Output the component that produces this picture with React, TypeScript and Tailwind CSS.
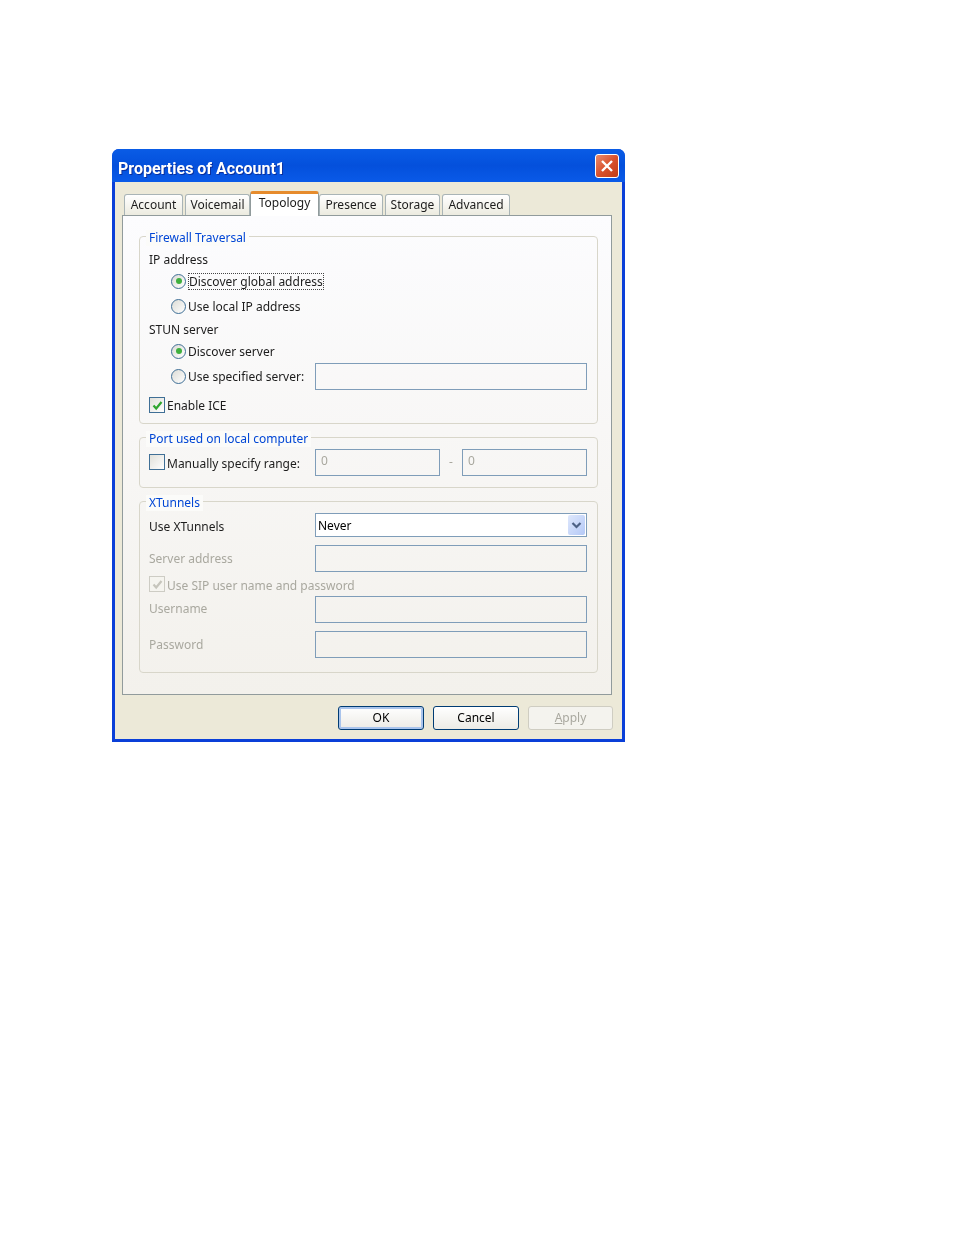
import React from 'react';

const tabs = [
  { label: 'Account', width: 'w-[59px]', gap: 'mr-[2px]' },
  { label: 'Voicemail', width: 'w-[65px]', gap: '' },
  { label: 'Topology', width: 'w-[69px]', gap: '', selected: true },
  { label: 'Presence', width: 'w-[64px]', gap: 'mr-[2px]' },
  { label: 'Storage', width: 'w-[55px]', gap: 'mr-[2px]' },
  { label: 'Advanced', width: 'w-[68px]', gap: '' },
];

function Radio({ checked }: { checked?: boolean }) {
  return (
    <span className="flex h-[15px] w-[15px] shrink-0 items-center justify-center rounded-full border border-[#3f6f96] bg-gradient-to-br from-[#dcdcd6] to-white">
      {checked && <span className="h-[6px] w-[6px] rounded-full bg-[#3fb03f]" />}
    </span>
  );
}

function Check({ checked, disabled }: { checked?: boolean; disabled?: boolean }) {
  return (
    <span
      className={
        disabled
          ? 'flex h-[16px] w-[16px] shrink-0 items-center justify-center border border-[#cdccc4] bg-[#f5f4ef]'
          : 'flex h-[16px] w-[16px] shrink-0 items-center justify-center border border-[#3f6f96] bg-gradient-to-br from-[#e0e0da] to-white'
      }
    >
      {checked && (
        <svg width="11" height="11" viewBox="0 0 11 11" fill="none">
          <path
            d="M1.5 5.5 L4.2 8.5 L9.5 2"
            stroke={disabled ? '#c6c5bc' : '#2fa52f'}
            strokeWidth="2.2"
          />
        </svg>
      )}
    </span>
  );
}

function Field({ value, className }: { value?: string; className: string }) {
  return (
    <div className={`flex shrink-0 items-center border border-[#7f9db9] pb-[3px] pl-[5px] text-[#a9a89f] ${className}`}>
      {value}
    </div>
  );
}

function Group({ title, className, children }: { title: string; className: string; children: React.ReactNode }) {
  return (
    <div className={`relative ml-[16px] mr-[13px] rounded-[4px] border border-[#d8d6ca] pl-[9px] ${className}`}>
      <span className="absolute left-[6px] top-[-7px] bg-[#fbfbf9] px-[3px] leading-[16px] text-[#0046d5]">
        {title}
      </span>
      {children}
    </div>
  );
}

function DialogButton({ label, primary }: { label: string; primary?: boolean }) {
  return (
    <button
      className={`flex h-[24px] w-[86px] items-center justify-center rounded-[3px] border border-[#003c74] bg-gradient-to-b from-white to-[#ecebe5] text-black ${
        primary ? 'shadow-[inset_0_0_0_2px_#a9c4ec]' : ''
      }`}
    >
      {label}
    </button>
  );
}

export default function App() {
  return (
    <div className="min-h-[1235px] bg-white pl-[112px] pt-[149px] font-['Noto_Sans','DejaVu_Sans',sans-serif] text-[12px] text-[#1c1c1c]">
      <div className="h-[593px] w-[513px] overflow-hidden rounded-t-[7px] bg-[#0a3fd8] blur-[0.35px]">
        <div className="flex h-[33px] items-center justify-between bg-gradient-to-b from-[#0a5ce6] via-[#0450dc] to-[#0a5ae8] pl-[6px] pr-[6px]">
          <span className="pt-[7px] font-['Roboto',sans-serif] text-[16px] font-bold text-white [text-shadow:1px_1px_0_#0a2f9c]">
            Properties of Account1
          </span>
          <span className="flex h-[24px] w-[24px] items-center justify-center rounded-[3px] border border-white bg-gradient-to-br from-[#e98a6c] via-[#d9512c] to-[#c23c14]">
            <svg width="14" height="14" viewBox="0 0 14 14" fill="none">
              <path d="M2 2 L12 12 M12 2 L2 12" stroke="white" strokeWidth="2.4" />
            </svg>
          </span>
        </div>

        <div className="mx-[3px] h-[557px] bg-[#ece9d8] pt-[9px]">
          <div className="flex h-[24px] items-end pl-[9px]">
            {tabs.map((tab) =>
              tab.selected ? (
                <div
                  key={tab.label}
                  className={`relative z-10 -mb-px flex h-[25px] ${tab.width} items-start justify-center rounded-t-[3px] border-x border-[#919b9c] border-t-[3px] border-t-[#e68b2c] bg-white pt-[1px] leading-[16px]`}
                >
                  {tab.label}
                </div>
              ) : (
                <div
                  key={tab.label}
                  className={`flex h-[21px] ${tab.width} ${tab.gap} items-center justify-center rounded-t-[3px] border-x border-t border-[#a9b4b6] bg-gradient-to-b from-white to-[#ecebe0]`}
                >
                  {tab.label}
                </div>
              )
            )}
          </div>

          <div className="ml-[7px] h-[480px] w-[490px] border border-[#919b9c] bg-gradient-to-b from-[#fcfcfe] to-[#f3f1ec] pt-[20px]">
            <Group title="Firewall Traversal" className="h-[188px] pt-[11px]">
              <div className="flex h-[22px] items-center pt-[2px]">IP address</div>
              <div className="flex h-[22px] items-center pl-[22px]">
                <Radio checked />
                <span className="ml-[2px] border border-dotted border-[#444] leading-[15px]">Discover global address</span>
              </div>
              <div className="flex h-[28px] items-center pl-[22px]">
                <Radio />
                <span className="ml-[2px] pt-[2px]">Use local IP address</span>
              </div>
              <div className="flex h-[18px] items-center pt-[1px]">STUN server</div>
              <div className="flex h-[26px] items-center pl-[22px]">
                <Radio checked />
                <span className="ml-[2px] pt-[2px]">Discover server</span>
              </div>
              <div className="flex h-[24px] items-center pl-[22px]">
                <Radio />
                <span className="ml-[2px] w-[127px] pt-[2px]">Use specified server:</span>
                <Field className="h-[27px] w-[272px]" />
              </div>
              <div className="flex h-[34px] items-center">
                <Check checked />
                <span className="ml-[2px] pt-[2px]">Enable ICE</span>
              </div>
            </Group>

            <Group title="Port used on local computer" className="mt-[13px] h-[51px]">
              <div className="flex h-[48px] items-center">
                <Check />
                <span className="ml-[2px] w-[148px] pt-[3px]">Manually specify range:</span>
                <Field value="0" className="h-[27px] w-[125px]" />
                <span className="w-[22px] text-center text-[#a9a89f]">-</span>
                <Field value="0" className="h-[27px] w-[125px]" />
              </div>
            </Group>

            <Group title="XTunnels" className="mt-[13px] h-[172px] pt-[11px]">
              <div className="flex h-[24px] items-center">
                <span className="w-[166px] pt-[3px]">Use XTunnels</span>
                <div className="flex h-[24px] w-[272px] items-center justify-between border border-[#7f9db9] bg-white pl-[2px] pr-[1px] text-black">
                  <span className="pt-[2px]">Never</span>
                  <span className="flex h-[20px] w-[17px] items-center justify-center rounded-[2px] bg-gradient-to-br from-[#dfe8fc] to-[#b4c8f6]">
                    <svg width="11" height="9" viewBox="0 0 11 9" fill="none">
                      <path d="M1.5 2 L5.5 6 L9.5 2" stroke="#4d6185" strokeWidth="2.2" />
                    </svg>
                  </span>
                </div>
              </div>
              <div className="mt-[8px] flex h-[27px] items-center text-[#a9a89f]">
                <span className="w-[166px]">Server address</span>
                <Field className="h-[27px] w-[272px]" />
              </div>
              <div className="flex h-[24px] items-center text-[#a9a89f]">
                <Check checked disabled />
                <span className="ml-[2px] pt-[3px]">Use SIP user name and password</span>
              </div>
              <div className="flex h-[26px] items-center text-[#a9a89f]">
                <span className="w-[166px]">Username</span>
                <Field className="h-[27px] w-[272px]" />
              </div>
              <div className="mt-[9px] flex h-[27px] items-center text-[#a9a89f]">
                <span className="w-[166px]">Password</span>
                <Field className="h-[27px] w-[272px]" />
              </div>
            </Group>
          </div>

          <div className="mr-[9px] mt-[11px] flex justify-end gap-[9px]">
            <DialogButton label="OK" primary />
            <DialogButton label="Cancel" />
            <div className="flex h-[24px] w-[85px] items-center justify-center rounded-[3px] border border-[#cfcdc2] bg-[#f4f3ee] text-[#a9a89f]">
              <span>
                <span className="underline">A</span>pply
              </span>
            </div>
          </div>
        </div>
      </div>
    </div>
  );
}
